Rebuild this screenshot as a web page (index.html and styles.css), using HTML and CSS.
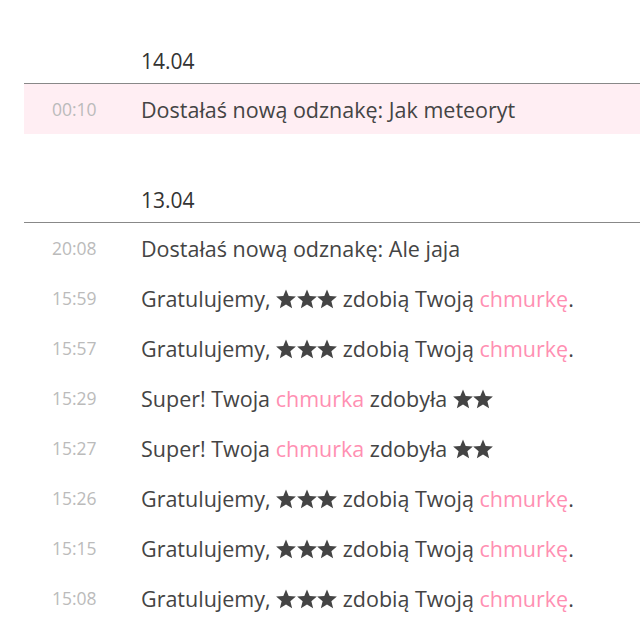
FILE: index.html
```html
<!DOCTYPE html>
<html lang="pl">
<head>
<meta charset="utf-8">
<link rel="stylesheet" href="styles.css">
</head>
<body>
<svg class="defs" width="0" height="0" aria-hidden="true">
  <defs>
    <polygon id="star" points="10,0.4 12.7,7.08 19.89,7.59 14.37,12.22 16.11,19.21 10,15.4 3.89,19.21 5.63,12.22 0.11,7.59 7.3,7.08"/>
  </defs>
</svg>
<div class="feed">
  <section class="day">
    <div class="date">14.04</div>
    <div class="row new"><span class="time">00:10</span><span class="msg">Dostałaś nową odznakę: Jak meteoryt</span></div>
  </section>
  <section class="day">
    <div class="date">13.04</div>
    <div class="row"><span class="time">20:08</span><span class="msg">Dostałaś nową odznakę: Ale jaja</span></div>
    <div class="row"><span class="time">15:59</span><span class="msg">Gratulujemy, <span class="stars"><svg viewBox="0 0 20 20"><use href="#star"/></svg><svg viewBox="0 0 20 20"><use href="#star"/></svg><svg viewBox="0 0 20 20"><use href="#star"/></svg></span> zdobią Twoją <span class="link">chmurkę</span>.</span></div>
    <div class="row"><span class="time">15:57</span><span class="msg">Gratulujemy, <span class="stars"><svg viewBox="0 0 20 20"><use href="#star"/></svg><svg viewBox="0 0 20 20"><use href="#star"/></svg><svg viewBox="0 0 20 20"><use href="#star"/></svg></span> zdobią Twoją <span class="link">chmurkę</span>.</span></div>
    <div class="row"><span class="time">15:29</span><span class="msg">Super! Twoja <span class="link">chmurka</span> zdobyła <span class="stars"><svg viewBox="0 0 20 20"><use href="#star"/></svg><svg viewBox="0 0 20 20"><use href="#star"/></svg></span></span></div>
    <div class="row"><span class="time">15:27</span><span class="msg">Super! Twoja <span class="link">chmurka</span> zdobyła <span class="stars"><svg viewBox="0 0 20 20"><use href="#star"/></svg><svg viewBox="0 0 20 20"><use href="#star"/></svg></span></span></div>
    <div class="row"><span class="time">15:26</span><span class="msg">Gratulujemy, <span class="stars"><svg viewBox="0 0 20 20"><use href="#star"/></svg><svg viewBox="0 0 20 20"><use href="#star"/></svg><svg viewBox="0 0 20 20"><use href="#star"/></svg></span> zdobią Twoją <span class="link">chmurkę</span>.</span></div>
    <div class="row"><span class="time">15:15</span><span class="msg">Gratulujemy, <span class="stars"><svg viewBox="0 0 20 20"><use href="#star"/></svg><svg viewBox="0 0 20 20"><use href="#star"/></svg><svg viewBox="0 0 20 20"><use href="#star"/></svg></span> zdobią Twoją <span class="link">chmurkę</span>.</span></div>
    <div class="row"><span class="time">15:08</span><span class="msg">Gratulujemy, <span class="stars"><svg viewBox="0 0 20 20"><use href="#star"/></svg><svg viewBox="0 0 20 20"><use href="#star"/></svg><svg viewBox="0 0 20 20"><use href="#star"/></svg></span> zdobią Twoją <span class="link">chmurkę</span>.</span></div>
  </section>
</div>
</body>
</html>
```
FILE: styles.css
```css
html, body { margin: 0; padding: 0; background: #fff; }
body { font-family: "Open Sans", "Noto Sans", sans-serif; color: #444; }
.defs { position: absolute; width: 0; height: 0; overflow: hidden; }
.feed { padding: 38px 0 0 24px; display: flex; flex-direction: column; gap: 43px; }
.date {
  height: 46px; box-sizing: border-box; border-bottom: 1px solid #888;
  display: flex; align-items: center; padding-left: 117px;
  font-size: 21px; color: #333;
}
.row { height: 50px; display: flex; align-items: center; }
.row.new { background: #ffeef3; }
.time { width: 117px; box-sizing: border-box; padding-left: 28px; font-size: 17.5px; color: #bbb; }
.msg { font-size: 21.5px; white-space: nowrap; }
.stars { display: inline-flex; gap: 0.5px; vertical-align: -2px; }
.stars svg { width: 20px; height: 20px; fill: #444; }
.link { color: #ff8fb2; }
```
